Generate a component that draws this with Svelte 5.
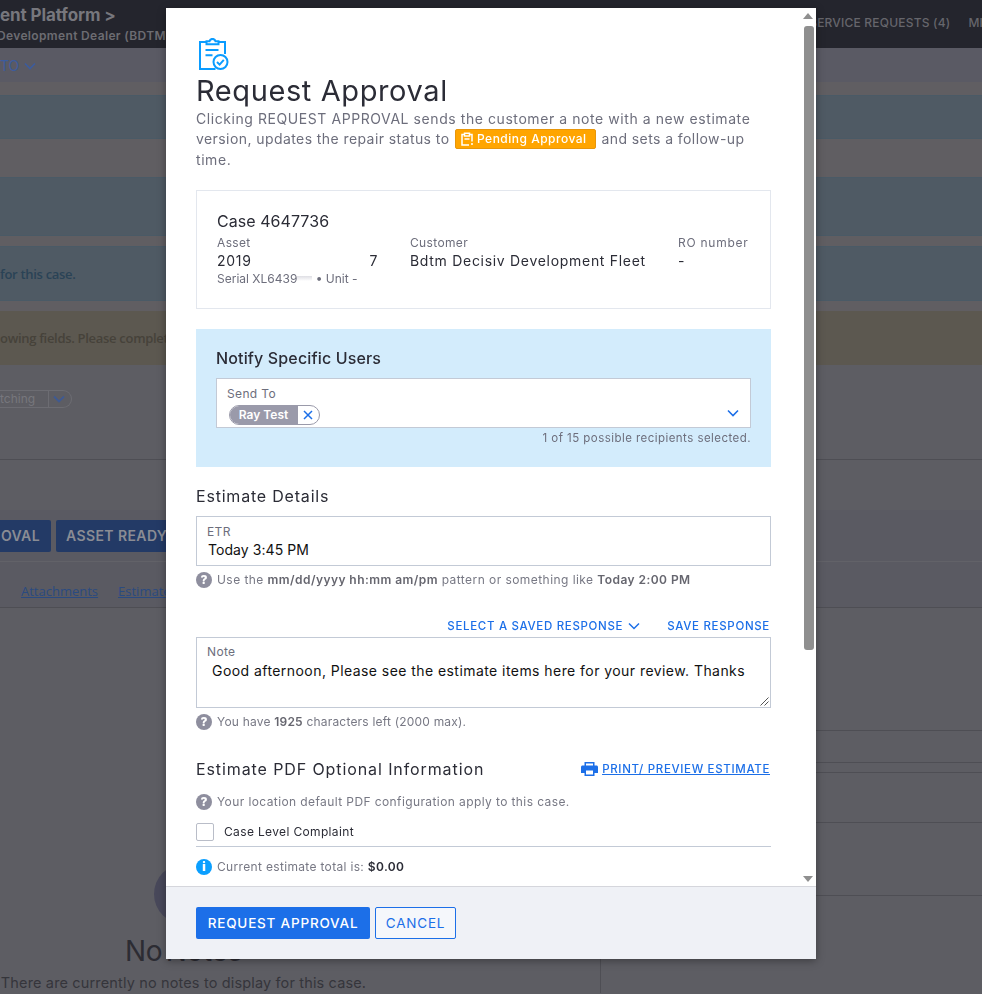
<script>
  const bands = [
    { cls: 'b-gap', h: 13 },
    { cls: 'b-blue', h: 44 },
    { cls: 'b-grey', h: 38 },
    { cls: 'b-blue', h: 59 },
    { cls: 'b-gap', h: 10 },
    { cls: 'b-blue', h: 55, text: 'for this case.' },
    { cls: 'b-gap', h: 10 },
    { cls: 'b-yellow', h: 54, text: 'owing fields. Please complete the required information' }
  ];
  const sideRows = [123, 32, 10, 50, 73];
</script>

<div class="page">
  <header class="top">
    <div class="brand">
      <div class="brand-name">ent Platform &gt;</div>
      <div class="brand-sub">Development Dealer (BDTM)</div>
    </div>
    <nav class="topnav"><span>SERVICE REQUESTS (4)</span><span>MI</span></nav>
  </header>
  <div class="subbar">
    <span class="to">TO</span>
    <svg class="to-chev" width="12" height="8" viewBox="0 0 12 8"><path d="M1 1.5l5 5 5-5" fill="none" stroke="currentColor" stroke-width="1.6"/></svg>
  </div>

  {#each bands as b}
    <div class="band {b.cls}" style="height:{b.h}px">{#if b.text}<span class="band-text">{b.text}</span>{/if}</div>
  {/each}

  <div class="status-row">
    <div class="pill"><span>tching</span><i></i><svg width="12" height="8" viewBox="0 0 12 8"><path d="M1 1.5l5 5 5-5" fill="none" stroke="#3f5a92" stroke-width="1.8"/></svg></div>
  </div>
  <div class="spacer"></div>
  <div class="action-row">
    <span class="bg-btn first">OVAL</span>
    <span class="bg-btn">ASSET READY</span>
  </div>
  <div class="tab-row">
    <a href="#a">Attachments</a>
    <a href="#e">Estimates</a>
  </div>
  <div class="lower">
    <div class="notes">
      <div class="circle"></div>
      <div class="no-notes">No Notes</div>
      <div class="no-notes-sub">There are currently no notes to display for this case.</div>
    </div>
    <div class="side">
      {#each sideRows as h}
        <div class="side-row" style="height:{h}px"></div>
      {/each}
    </div>
  </div>
</div>

<div class="modal" role="dialog" aria-label="Request Approval">
  <div class="scroll">
    <svg class="clip-icon" width="30" height="32" viewBox="0 0 30 32" fill="none" stroke="#0a9cff" stroke-width="2">
      <path d="M7.5 4H1V31H16.5"/>
      <path d="M19.5 4H26V16"/>
      <path d="M7.5 6.2V3.2h3c.4-1.6 1.5-2.3 3-2.3s2.6.7 3 2.3h3v3z"/>
      <path d="M6.5 12h13M6.5 17.2h7"/>
      <circle cx="21.5" cy="24" r="7"/>
      <path d="M18 24l2.6 2.6 4.2-4.8"/>
    </svg>
    <h1>Request Approval</h1>
    <p class="intro">
      Clicking REQUEST APPROVAL sends the customer a note with a new estimate
      <span class="tight">version, updates the repair status to</span>
      <span class="badge">
        <svg width="12" height="14" viewBox="0 0 12 14" fill="none" stroke="#fff" stroke-width="1.5"><path d="M3.5 2.5H1v10.5h7M8.5 2.5H11v7M3.500 4V1.2h5V4zM11 11v2"/><path d="M3.5 7h5"/></svg>
        Pending Approval
      </span>
      <span class="tight">and sets a follow-up</span>
      time.
    </p>

    <section class="case">
      <h2 class="case-title">Case 4647736</h2>
      <div class="case-grid">
        <div class="c-asset">
          <div class="lbl">Asset</div>
          <div class="val asset-val"><span>2019</span><span>7</span></div>
          <div class="lbl serial">Serial XL6439<span class="redact"></span> • Unit -</div>
        </div>
        <div class="c-cust">
          <div class="lbl">Customer</div>
          <div class="val">Bdtm Decisiv Development Fleet</div>
        </div>
        <div class="c-ro">
          <div class="lbl">RO number</div>
          <div class="val">-</div>
        </div>
      </div>
    </section>

    <section class="notify">
      <h2>Notify Specific Users</h2>
      <div class="field send">
        <div class="lbl f-lbl">Send To</div>
        <div class="chip">
          <span class="chip-name">Ray Test</span>
          <span class="chip-x"><svg width="10" height="10" viewBox="0 0 10 10"><path d="M1 1l8 8M9 1l-8 8" stroke="#1c6fe8" stroke-width="1.5"/></svg></span>
        </div>
        <svg class="send-chev" width="12" height="8" viewBox="0 0 12 8"><path d="M1 1.5l5 5 5-5" fill="none" stroke="#1c6fe8" stroke-width="1.6"/></svg>
      </div>
      <div class="count">1 of 15 possible recipients selected.</div>
    </section>

    <h2 class="sec est">Estimate Details</h2>
    <div class="field etr">
      <div class="lbl f-lbl">ETR</div>
      <div class="etr-val">Today 3:45 PM</div>
    </div>
    <div class="hint h1"><span class="q">?</span><span>Use the <b>mm/dd/yyyy hh:mm am/pm</b> pattern or something like <b>Today 2:00 PM</b></span></div>

    <div class="links">
      <a href="#s" class="link">SELECT A SAVED RESPONSE
        <svg width="12" height="8" viewBox="0 0 12 8"><path d="M1 1.5l5 5 5-5" fill="none" stroke="#1c6fe8" stroke-width="1.5"/></svg>
      </a>
      <a href="#r" class="link">SAVE RESPONSE</a>
    </div>
    <div class="field note">
      <div class="lbl f-lbl">Note</div>
      <div class="note-val">Good afternoon, Please see the estimate items here for your review. Thanks</div>
      <svg class="grip" width="10" height="10" viewBox="0 0 10 10"><path d="M9.5 1.5L1.5 9.5M9.5 5.5L5.5 9.5" stroke="#555" stroke-width="1"/></svg>
    </div>
    <div class="hint h2"><span class="q">?</span><span>You have <b>1925</b> characters left (2000 max).</span></div>

    <div class="pdf-head">
      <h2 class="sec">Estimate PDF Optional Information</h2>
      <a href="#p" class="print">
        <svg width="17" height="14" viewBox="0 0 17 14"><path fill="#1c6fe8" d="M3.5 0h10v3.5h2c.8 0 1.500.7 1.500 1.500v6h-3.500v3h-10v-3H0V5c0-.8.7-1.500 1.500-1.500h2zM5 1.500v2h7v-2zM5 8.500v4h7v-4z"/></svg>
        <span>PRINT/ PREVIEW ESTIMATE</span>
      </a>
    </div>
    <div class="hint h3"><span class="q">?</span><span>Your location default PDF configuration apply to this case.</span></div>
    <label class="check"><span class="box"></span><span>Case Level Complaint</span></label>
    <div class="hint h4"><span class="q info">i</span><span>Current estimate total is: <b class="dark">$0.00</b></span></div>
  </div>

  <div class="sb-up"></div>
  <div class="sb-thumb"></div>
  <div class="sb-down"></div>

  <footer class="foot">
    <button class="primary">REQUEST APPROVAL</button>
    <button class="ghost">CANCEL</button>
  </footer>
</div>

<style>
  :global(body) {
    margin: 0;
    background: #5d5d63;
    font-family: Inter, "Liberation Sans", sans-serif;
    overflow: hidden;
  }
  .page { width: 982px; height: 994px; overflow: hidden; color: #85858b; }
  .top {
    height: 48px; background: #24252d; display: flex; justify-content: space-between;
    white-space: nowrap; overflow: hidden;
  }
  .brand-name { font-size: 17px; font-weight: 700; line-height: 20px; margin-top: 5px; letter-spacing: -.1px; color: #77777d; }
  .brand-sub { font-size: 12px; font-weight: 600; line-height: 16px; margin-top: 3px; margin-left: -3px; letter-spacing: .35px; color: #6c6c72; }
  .topnav { display: flex; gap: 18px; font-size: 12px; font-weight: 500; line-height: 46px; color: #66666c; margin-right: -1px; letter-spacing: .2px; }
  .subbar {
    height: 34px; background: #5a5a64; display: flex; align-items: center; gap: 5px;
    font-size: 14px; color: #3c5c9e;
  }
  .to-chev { margin-top: 1px; }
  .band { display: flex; align-items: center; white-space: nowrap; font-family: "Open Sans", sans-serif; font-size: 13px; font-weight: 600; letter-spacing: -.3px; box-sizing: border-box; }
  .b-gap, .b-grey { background: #605e62; }
  .b-blue { background: #4f5a64; border-top: 1px solid #4a5a66; border-bottom: 1px solid #4a5a66; color: #2a4356; }
  .b-yellow { background: #5c5850; color: #46423a; }
  .status-row { height: 95px; box-sizing: border-box; padding-top: 22px; border-bottom: 1px solid #4e4e54; }
  .pill {
    display: inline-flex; align-items: center; height: 18px; width: 72px; box-sizing: border-box;
    border: 1px solid #6c6c72; border-left: 0; border-radius: 0 10px 10px 0; font-size: 12px; color: #77777d;
  }
  .pill span { width: 48px; }
  .pill i { width: 1px; height: 18px; background: #6c6c72; margin-right: 4px; }
  .spacer { height: 50px; }
  .action-row {
    height: 52px; box-sizing: border-box; padding-top: 10px; background: #5a5a62; display: flex; gap: 5px;
    border-bottom: 1px solid #626268; white-space: nowrap; overflow: hidden;
  }
  .bg-btn {
    height: 32px; background: #233a66; color: #8a8c94; font-size: 14px; font-weight: 600; line-height: 32px; letter-spacing: .4px;
    padding: 0 10px; border-radius: 2px; box-sizing: border-box; width: 118px;
  }
  .bg-btn.first { width: 51px; padding: 0; text-align: right; padding-right: 11px; border-radius: 0 2px 2px 0; }
  .tab-row {
    height: 46px; box-sizing: border-box; background: #5a5a62; padding: 12px 0 0 21px; display: flex; gap: 20px;
    align-items: center; border-bottom: 1px solid #4e4e54; white-space: nowrap; overflow: hidden;
    font-family: "Open Sans", sans-serif; font-size: 13px;
  }
  .tab-row a { color: #2a4a80; }
  .lower { display: flex; height: 385px; }
  .notes {
    width: 834px; margin-left: -233px; flex: none; box-sizing: border-box; border-right: 1px solid #4e4e54;
    display: flex; flex-direction: column; align-items: center; padding-top: 256px; overflow: hidden;
  }
  .circle { width: 60px; height: 60px; border-radius: 50%; background: #48485a; flex: none; }
  .no-notes { font-size: 28px; font-weight: 400; line-height: 32px; margin-top: 11px; color: #2c2c33; letter-spacing: -.3px; word-spacing: -4px; }
  .no-notes-sub { font-size: 14.5px; line-height: 20px; margin-top: 6px; color: #35353b; letter-spacing: .15px; }
  .side { flex: 1; }
  .side-row { border-bottom: 1px solid #4e4e54; box-sizing: border-box; }

  .modal {
    position: fixed; left: 166px; top: 8px; width: 650px; height: 951px; background: #fff;
    box-shadow: 0 2px 8px rgba(0,0,0,.35); display: flex; flex-direction: column;
  }
  .scroll { flex: 1; min-height: 0; overflow: hidden; box-sizing: border-box; padding: 30px 45px 0 30px; color: #6d6e7c; }
  .clip-icon { display: block; margin-left: 3px; }
  h1 { margin: 3px 0 0; font-size: 29px; font-weight: 400; line-height: 35.5px; color: #2b2c36; letter-spacing: .6px; }
  .intro { margin: 0; font-size: 14px; line-height: 20.5px; width: 572px; letter-spacing: .57px; color: #6d6e7c; }
  .tight { letter-spacing: .42px; }
  .badge {
    display: inline-flex; align-items: center; gap: 4px; width: 141px; height: 20px; box-sizing: border-box; padding-left: 5px;
    background: #ffa500; border: 1px solid #e8960a; border-radius: 2px; color: #fff; font-size: 12px; font-weight: 500;
    vertical-align: top; margin: 0 1px; letter-spacing: .5px; line-height: 18px;
  }
  .case {
    margin-top: 19.5px; height: 119px; box-sizing: border-box; border: 1px solid #e3e7ee; padding: 20px 20px 0;
  }
  .case-title { margin: 0; font-size: 16px; font-weight: 400; line-height: 20px; color: #2b2c36; letter-spacing: .05px; }
  .case-grid { display: grid; grid-template-columns: 193px 268px 1fr; margin-top: 4px; }
  .asset-val { display: flex; justify-content: space-between; width: 161px; letter-spacing: 0; }
  .lbl { font-size: 12px; line-height: 16px; color: #6d6e7c; letter-spacing: .35px; }
  .c-ro .lbl { letter-spacing: .75px; }
  .val { font-size: 14px; line-height: 20px; color: #2b2c36; letter-spacing: .7px; white-space: nowrap; }
  .serial { margin-top: 0; letter-spacing: 0; }
  .redact { display: inline-block; width: 15px; height: 5px; margin-bottom: 2px; background: linear-gradient(#dedee4, #fff); }
  .notify {
    margin-top: 20px; height: 138px; box-sizing: border-box; background: #d3ecfc; padding: 19px 20px 0;
  }
  .notify h2 { margin: 0; font-size: 16px; font-weight: 500; line-height: 20px; color: #2b2c36; letter-spacing: .15px; }
  .field { border: 1px solid #c3cad6; background: #fff; box-sizing: border-box; position: relative; }
  .send { height: 50px; margin-top: 10px; padding: 7px 0 0 10px; }
  .f-lbl { line-height: 15px; }
  .chip {
    display: inline-flex; height: 20px; margin: 4px 0 0 2px; border: 1px solid #9a9aaa; border-radius: 10px; overflow: hidden; box-sizing: border-box; width: 91px;
  }
  .chip-name {
    width: 67px; background: #9a9aaa; color: #fff; font-size: 12px; font-weight: 600; line-height: 18px; text-align: center;
  }
  .chip-x { flex: 1; display: flex; align-items: center; justify-content: center; border-left: 1px solid #9a9aaa; margin-right: 2px; }
  .send-chev { position: absolute; right: 11px; top: 30px; }
  .count { margin-top: 3px; text-align: right; font-size: 11.5px; line-height: 15px; letter-spacing: .45px; }
  .sec { margin: 0; font-size: 16px; font-weight: 400; line-height: 20px; color: #2b2c36; letter-spacing: .8px; white-space: nowrap; }
  .pdf-head .sec { letter-spacing: .9px; }
  .est { margin-top: 19px; }
  .etr { height: 50px; margin-top: 10px; padding: 7px 10px 0 10px; }
  .etr-val { font-size: 14px; line-height: 20px; color: #111; letter-spacing: .07px; margin-top: 1px; margin-left: 1px; }
  .hint { display: flex; align-items: center; gap: 5px; height: 16px; margin-top: 5px; font-size: 12px; letter-spacing: .4px; white-space: nowrap; color: #777884; }
  .hint b { font-weight: 600; color: #66666f; }
  .hint b.dark { color: #2b2c36; }
  .q {
    width: 16px; height: 16px; border-radius: 50%; background: #8e8e9e; color: #fff; font-size: 12px; font-weight: 800;
    line-height: 16px; text-align: center; flex: none; letter-spacing: 0;
  }
  .q.info { background: #0b9fff; font-weight: 900; }
  .h1 { margin-top: 6px; letter-spacing: .44px; }
  .links { display: flex; justify-content: flex-end; gap: 27px; margin-top: 30px; height: 16px; padding-right: 1px; }
  .link { display: inline-flex; align-items: center; gap: 5px; color: #1c6fe8; text-decoration: none; font-size: 11.5px; font-weight: 500; line-height: 16px; letter-spacing: .68px; white-space: nowrap; }
  .note { height: 71px; margin-top: 3px; padding: 6px 10px 0; }
  .note-val { font-size: 14px; line-height: 20px; color: #111; margin-top: 2px; margin-left: 5px; letter-spacing: .44px; white-space: nowrap; }
  .grip { position: absolute; right: 1px; bottom: 1px; }
  .h2 { margin-top: 6px; letter-spacing: .2px; }
  .pdf-head { display: flex; justify-content: space-between; align-items: center; margin-top: 29px; height: 20px; }
  .print { display: inline-flex; align-items: center; gap: 4px; color: #1c6fe8; font-size: 11.5px; font-weight: 500; letter-spacing: .66px; margin-right: 1px; white-space: nowrap; }
  .print span { text-decoration: underline; }
  .h3 { margin-top: 15px; }
  .check {
    display: flex; align-items: center; gap: 10px; margin-top: 13px; height: 24px; box-sizing: border-box; padding-bottom: 5px;
    border-bottom: 1px solid #c3cad6; font-size: 12px; color: #2b2c36; letter-spacing: .35px;
  }
  .box { width: 18px; height: 18px; box-sizing: border-box; border: 1px solid #b9bdc8; border-radius: 2px; background: #fff; }
  .h4 { margin-top: 12px; letter-spacing: .33px; }

  .sb-up, .sb-down { position: absolute; right: 3px; width: 0; height: 0; border-left: 5px solid transparent; border-right: 5px solid transparent; }
  .sb-up { top: 5px; border-bottom: 6px solid #8f8f8f; }
  .sb-down { top: 868px; border-top: 6px solid #8f8f8f; }
  .sb-thumb { position: absolute; right: 2px; top: 18px; width: 10px; height: 624px; background: #8f8f8f; border-radius: 3px; }

  .foot {
    height: 73px; flex: none; box-sizing: border-box; background: #eff1f6; border-top: 1px solid #d5d6dc; padding: 20px 0 0 30px;
    display: flex; gap: 5px; align-items: flex-start;
  }
  button { font-family: inherit; height: 32px; font-size: 13.5px; border-radius: 2px; box-sizing: border-box; letter-spacing: .8px; white-space: nowrap; padding: 0; }
  .primary { width: 174px; background: #1c6fe8; color: #fff; border: 0; font-weight: 500; }
  .ghost { width: 81px; background: #f5f7fb; color: #1c6fe8; border: 1px solid #1c6fe8; }
</style>
